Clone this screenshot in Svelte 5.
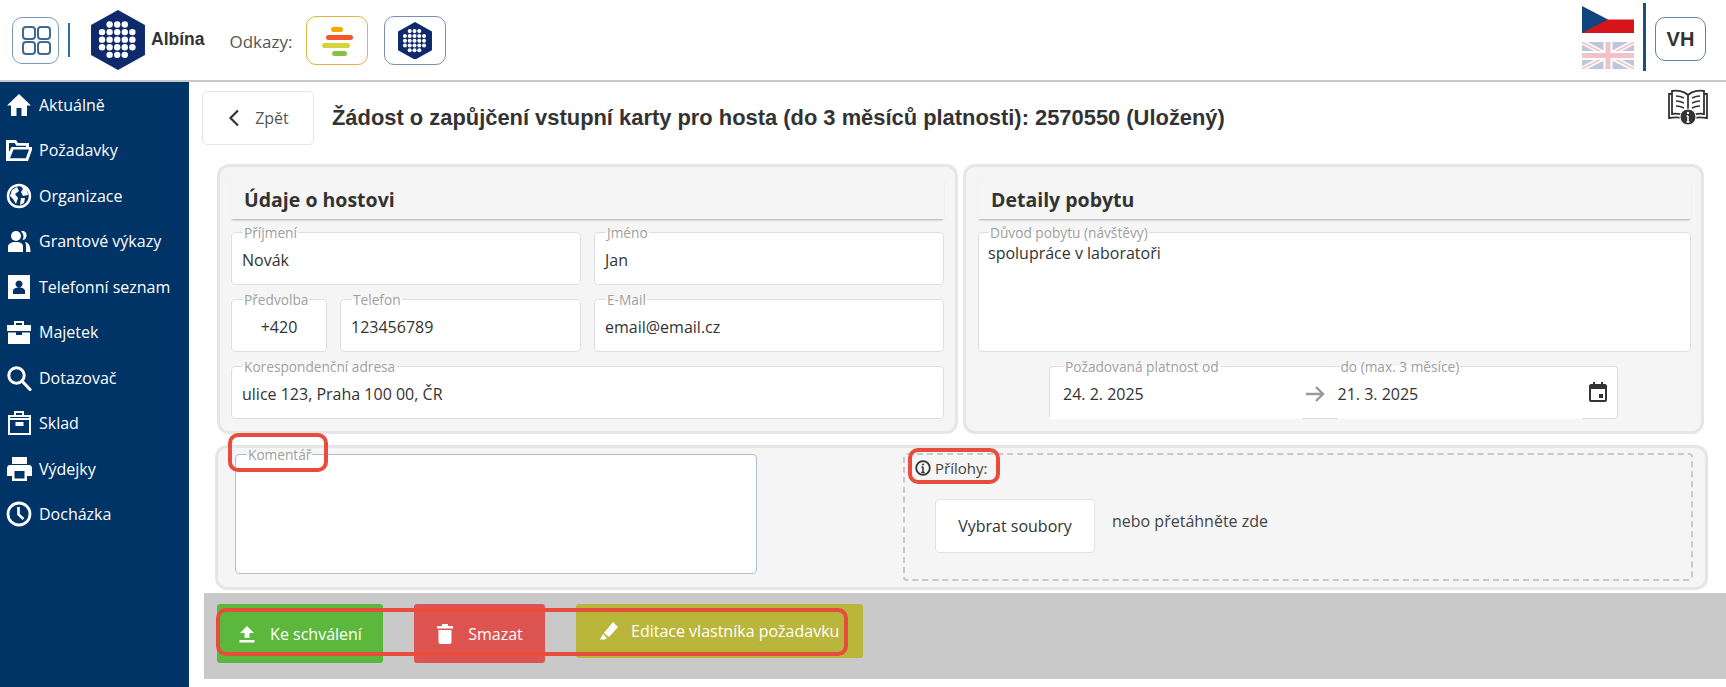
<script lang="ts">
	// Dots of the hexagon logo, row by row (x positions on a 5 column grid)
	const dotRows = [[1, 2, 3], [0, 1, 2, 3, 4], [0, 1, 2, 3, 4], [0, 1, 2, 3, 4], [1, 2, 3]];

	const menu = [
		{ label: 'Aktuálně', icon: 'home' },
		{ label: 'Požadavky', icon: 'folder' },
		{ label: 'Organizace', icon: 'globe' },
		{ label: 'Grantové výkazy', icon: 'users' },
		{ label: 'Telefonní seznam', icon: 'card' },
		{ label: 'Majetek', icon: 'case' },
		{ label: 'Dotazovač', icon: 'search' },
		{ label: 'Sklad', icon: 'box' },
		{ label: 'Výdejky', icon: 'print' },
		{ label: 'Docházka', icon: 'clock' }
	];
</script>

{#snippet logo(size)}
	<svg width={size} height={size * 1.11} viewBox="0 0 54 60">
		<polygon points="27,0 54,15 54,45 27,60 0,45 0,15" fill="#0f2a6b" />
		{#each dotRows as row, r}
			{#each row as c}
				<circle cx={11 + c * 7.6} cy={14.5 + r * 7.6} r="3.2" fill="#fff" />
			{/each}
		{/each}
	</svg>
{/snippet}

<div class="page">
	<header>
		<div class="header-left">
			<button class="grid-btn" aria-label="Menu">
				<svg width="30" height="30" viewBox="0 0 30 30" fill="none" stroke="#3f6a92" stroke-width="2">
					<rect x="2" y="2" width="12" height="12" rx="3" />
					<rect x="17" y="2" width="12" height="12" rx="3" />
					<rect x="2" y="17" width="12" height="12" rx="3" />
					<rect x="17" y="17" width="12" height="12" rx="3" />
				</svg>
			</button>
			<span class="divider-thin"></span>
			<div class="brand">
				{@render logo(54)}
				<strong>Albína</strong>
			</div>
			<span class="links-label">Odkazy:</span>
			<button class="link-btn yellow" aria-label="Odkaz 1">
				<svg width="34" height="34" viewBox="0 0 34 34">
					<rect x="11" y="3" width="12" height="5" rx="2.5" fill="#f7a800" />
					<rect x="6" y="11" width="27" height="5" rx="2.5" fill="#f2582a" />
					<rect x="2" y="19" width="28" height="5" rx="2.5" fill="#d5d33a" />
					<rect x="12" y="27" width="15" height="5" rx="2.5" fill="#85c241" />
				</svg>
			</button>
			<button class="link-btn navy" aria-label="Odkaz 2">{@render logo(34)}</button>
		</div>
		<div class="header-right">
			<div class="flags">
				<svg width="52" height="27" viewBox="0 0 52 27">
					<rect width="52" height="13.5" fill="#fff" />
					<rect y="13.5" width="52" height="13.5" fill="#d7141a" />
					<polygon points="0,0 26,13.5 0,27" fill="#11457e" />
				</svg>
				<svg class="uk" width="52" height="27" viewBox="0 0 52 27">
					<rect width="52" height="27" fill="#012169" />
					<path d="M0 0L52 27M52 0L0 27" stroke="#fff" stroke-width="5" />
					<path d="M0 0L52 27M52 0L0 27" stroke="#c8102e" stroke-width="1.6" />
					<path d="M26 0V27M0 13.5H52" stroke="#fff" stroke-width="9" />
					<path d="M26 0V27M0 13.5H52" stroke="#c8102e" stroke-width="5" />
				</svg>
			</div>
			<span class="divider-thick"></span>
			<button class="user-btn">VH</button>
		</div>
	</header>

	<div class="body">
		<aside>
			<ul>
				{#each menu as item}
					<li>
						<svg class="nav-icon" width="26" height="26" viewBox="0 0 26 26" fill="#fff">
							{#if item.icon === 'home'}
								<path d="M13 2L1 13.5H5V24H10.5V16H15.5V24H21V13.5H25Z" />
							{:else if item.icon === 'folder'}
								<path fill-rule="evenodd" d="M0 3H10L12 6H23V10H27L22 24H0ZM3 6V15L5.5 10H20V8.8H10.5L8.5 6ZM7.5 12.5L4 21.2H19.8L23 12.5Z" />
							{:else if item.icon === 'globe'}
								<circle cx="13" cy="13" r="11" fill="none" stroke="#fff" stroke-width="2.5" />
								<path d="M6 7L11 4L13 8L9 11L12 15L10 21L7 16L4 13ZM15 3L21 6L22 12L17 13L15 9L17 6ZM15 15L19 15L18 20L14 22Z" />
							{:else if item.icon === 'users'}
								<circle cx="10" cy="8" r="5" />
								<path d="M2 24V19C2 15.5 5 14 10 14C15 14 17 15.5 17 19V24Z" />
								<path d="M15 3.5C18.5 2 21 5 20.5 8C20 11 18 12 16.5 12C18 10 18 6 15 3.5ZM19 14C22 14.5 24.5 16.5 24.5 24H20V19C20 17 20 15.5 19 14Z" />
							{:else if item.icon === 'card'}
								<path fill-rule="evenodd" d="M2 1H24V25H2ZM13 6.5A3.5 3.5 0 1 0 13.01 6.5ZM7 20H19V17C19 15 16.5 13.5 13 13.5C9.5 13.5 7 15 7 17Z" />
							{:else if item.icon === 'case'}
								<path fill-rule="evenodd" d="M8 2H18V6H25V12H1V6H8ZM10 4V6H16V4Z" />
								<path d="M2 13.5H10V16H16V13.5H24V25H2Z" />
							{:else if item.icon === 'search'}
								<circle cx="10.5" cy="10.5" r="7.7" fill="none" stroke="#fff" stroke-width="3" />
								<path d="M16 16L24 24.5" stroke="#fff" stroke-width="3.2" stroke-linecap="round" />
							{:else if item.icon === 'box'}
								<path fill-rule="evenodd" d="M8 1H18V5H25V25H2V5H8ZM10 3V5H16V3ZM4 10V23H23V10ZM4 7V8H23V7Z" />
								<rect x="9.5" y="12" width="8" height="4" />
							{:else if item.icon === 'print'}
								<path fill-rule="evenodd" d="M6 1H21V8H6ZM4 9H23C25 9 26 10.5 26 12V20H21V25H6V20H1V12C1 10.5 2 9 4 9ZM8.5 15V22.5H18.5V15Z" />
							{:else if item.icon === 'clock'}
								<circle cx="13" cy="13" r="11" fill="none" stroke="#fff" stroke-width="2.8" />
								<path d="M12.5 6V13.5L17.5 18" fill="none" stroke="#fff" stroke-width="2.6" />
							{/if}
						</svg>
						<span>{item.label}</span>
					</li>
				{/each}
			</ul>
		</aside>

		<main>
			<div class="title-row">
				<button class="back">
					<svg width="14" height="18" viewBox="0 0 14 18" fill="none" stroke="#333" stroke-width="2.2">
						<path d="M11 1.5L3.5 9L11 16.5" />
					</svg>
					Zpět
				</button>
				<h1>Žádost o zapůjčení vstupní karty pro hosta (do 3 měsíců platnosti): 2570550 (Uložený)</h1>
				<svg class="manual" width="40" height="38" viewBox="0 0 40 38" fill="none" stroke="#333" stroke-width="1.8">
					<path d="M20 7C16 3 9 2 4 3V26C9 25 16 26 20 30C24 26 31 25 36 26V3C31 2 24 3 20 7ZM20 7V30" fill="#fff" />
					<path d="M4 6H1V30C8 29 14 29 18 32M36 6H39V30C32 29 26 29 22 32" />
					<path d="M8 8C11 8 14 9 16 10M8 13C11 13 14 14 16 15M8 18C11 18 14 19 16 20M24 10C26 9 29 8 32 8M24 15C26 14 29 13 32 13M24 20C26 19 29 18 32 18" stroke-width="1.5" />
					<circle cx="20" cy="29" r="8" fill="#333" stroke="#fff" stroke-width="1" />
					<path d="M20 28V34M18.5 34H21.5M18.5 28H20" stroke="#fff" stroke-width="1.6" />
					<circle cx="20" cy="25" r="1.2" fill="#fff" stroke="none" />
				</svg>
			</div>

			<div class="panels">
				<section class="panel guest">
					<h2>Údaje o hostovi</h2>
					<div class="fields">
						<fieldset>
							<legend>Příjmení</legend>
							<div class="value">Novák</div>
						</fieldset>
						<fieldset>
							<legend>Jméno</legend>
							<div class="value">Jan</div>
						</fieldset>
						<div class="phone">
							<fieldset>
								<legend>Předvolba</legend>
								<div class="value center">+420</div>
							</fieldset>
							<fieldset>
								<legend>Telefon</legend>
								<div class="value">123456789</div>
							</fieldset>
						</div>
						<fieldset>
							<legend>E-Mail</legend>
							<div class="value">email@email.cz</div>
						</fieldset>
						<fieldset class="wide">
							<legend>Korespondenční adresa</legend>
							<div class="value">ulice 123, Praha 100 00, ČR</div>
						</fieldset>
					</div>
				</section>

				<section class="panel stay">
					<h2>Detaily pobytu</h2>
					<fieldset class="reason">
						<legend>Důvod pobytu (návštěvy)</legend>
						<div class="reason-text">spolupráce v laboratoři</div>
					</fieldset>
					<div class="dates">
						<fieldset class="date-from">
							<legend>Požadovaná platnost od</legend>
							<div class="value date">24. 2. 2025</div>
							<svg class="arrow" width="20" height="18" viewBox="0 0 20 18" fill="none" stroke="#9a9a9a" stroke-width="2.4">
								<path d="M1 9H18M11 2L18 9L11 16" />
							</svg>
						</fieldset>
						<fieldset class="date-to">
							<legend>do (max. 3 měsíce)</legend>
							<div class="value date">21. 3. 2025</div>
							<svg class="calendar" width="18" height="20" viewBox="0 0 18 20">
								<path fill-rule="evenodd" d="M4 0H6V2H12V0H14V2H16C17 2 18 3 18 4V18C18 19 17 20 16 20H2C1 20 0 19 0 18V4C0 3 1 2 2 2H4ZM2 7V18H16V7ZM10 12H14V16H10Z" fill="#333" />
							</svg>
						</fieldset>
					</div>
				</section>
			</div>

			<section class="panel lower">
				<fieldset class="comment">
					<legend>Komentář</legend>
				</fieldset>
				<div class="attachments">
					<div class="att-title">
						<svg width="16" height="16" viewBox="0 0 16 16" fill="none" stroke="#333" stroke-width="1.8">
							<circle cx="8" cy="8" r="6.8" />
							<path d="M8 7V12.5M6.5 7H8M6.3 12.4H9.7" stroke-width="1.5" />
							<circle cx="8" cy="4.5" r="1" fill="#333" stroke="none" />
						</svg>
						Přílohy:
					</div>
					<div class="att-row">
						<button class="pick">Vybrat soubory</button>
						<span>nebo přetáhněte zde</span>
					</div>
				</div>
				<span class="mark mark-comment"></span>
				<span class="mark mark-att"></span>
			</section>

			<div class="actions">
				<button class="act green">
					<svg width="18" height="18" viewBox="0 0 18 18" fill="#fff"><path d="M9 1L16 8H11.5V13H6.5V8H2ZM1.5 15H16.5V17.5H1.5Z" /></svg>
					Ke schválení
				</button>
				<button class="act red">
					<svg width="18" height="20" viewBox="0 0 18 20" fill="#fff"><path d="M6 0H12V2H17V4.5H1V2H6ZM2.5 6H15.5V18C15.5 19 14.5 20 13.5 20H4.5C3.5 20 2.5 19 2.5 18Z" /></svg>
					Smazat
				</button>
				<button class="act olive">
					<svg width="20" height="20" viewBox="0 0 20 20" fill="#fff"><path d="M14 1L19 6L10 16L5 12ZM4 13L8 17L6 18.5H1Z" /></svg>
					Editace vlastníka požadavku
				</button>
				<span class="mark mark-actions"></span>
			</div>
		</main>
	</div>
</div>

<style>
	:global(body) {
		font-family: 'Open Sans', sans-serif;
		color: #333;
		background: #fff;
		overflow: hidden;
	}
	button {
		font-family: inherit;
		cursor: pointer;
	}
	.page {
		height: 687px;
		display: flex;
		flex-direction: column;
	}

	/* top bar */
	header {
		height: 80px;
		flex: none;
		display: flex;
		justify-content: space-between;
		border-bottom: 2px solid #c8c8c8;
	}
	.header-left {
		display: flex;
		align-items: center;
		padding-left: 12px;
	}
	.grid-btn {
		width: 47px;
		height: 47px;
		padding: 0;
		display: grid;
		place-items: center;
		background: #fff;
		border: 1.5px solid #7b9cb8;
		border-radius: 10px;
	}
	.divider-thin {
		width: 2px;
		height: 34px;
		margin: 0 21px 0 9px;
		background: #2a6fa8;
	}
	.brand {
		display: flex;
		align-items: center;
		gap: 6px;
	}
	.brand strong {
		font-family: 'Liberation Sans', sans-serif;
		font-size: 17.5px;
		margin-top: -2px;
	}
	.links-label {
		font-size: 17px;
		color: #555;
		margin: 2px 14px 0 25px;
	}
	.link-btn {
		width: 62px;
		height: 49px;
		padding: 0;
		display: grid;
		place-items: center;
		background: #fff;
		border-radius: 10px;
		margin-right: 16px;
		margin-top: 1px;
	}
	.yellow {
		border: 1.5px solid #e3b440;
	}
	.navy {
		border: 1.5px solid #7a8fb3;
	}
	.header-right {
		display: flex;
		align-items: center;
		padding-right: 20px;
	}
	.flags {
		display: flex;
		flex-direction: column;
		gap: 9px;
		margin-top: -5px;
	}
	.flags svg {
		display: block;
	}
	.uk {
		opacity: 0.25;
	}
	.divider-thick {
		width: 3px;
		height: 68px;
		margin: -6px 9px 0;
		background: #1f4e80;
	}
	.user-btn {
		width: 51px;
		height: 44px;
		margin-top: -2px;
		padding: 0;
		font-family: 'Liberation Sans', sans-serif;
		font-size: 20px;
		font-weight: 700;
		color: #333;
		background: #fff;
		border: 1.5px solid #5b85a8;
		border-radius: 10px;
	}

	/* layout */
	.body {
		flex: 1;
		display: flex;
		min-height: 0;
	}
	aside {
		width: 189px;
		flex: none;
		background: #003366;
	}
	aside ul {
		list-style: none;
		margin: 0;
		padding: 0 0 0 6px;
	}
	li {
		height: 45.5px;
		display: flex;
		align-items: center;
		gap: 7px;
		color: #fff;
		font-size: 16px;
	}
	.nav-icon {
		flex: none;
	}
	main {
		flex: 1;
		min-width: 0;
	}

	/* title */
	.title-row {
		position: relative;
		display: flex;
		align-items: center;
		gap: 18px;
		padding: 9px 0 10px 13px;
		height: 73px;
		box-sizing: border-box;
	}
	.back {
		width: 112px;
		height: 54px;
		display: flex;
		align-items: center;
		justify-content: center;
		gap: 14px;
		padding: 0;
		font-size: 16px;
		color: #555;
		background: #fff;
		border: 1.5px solid #e6e6e6;
		border-radius: 5px;
	}
	h1 {
		margin: 0;
		font-family: 'Liberation Sans', sans-serif;
		font-size: 21.9px;
		font-weight: 700;
		color: #333;
		white-space: nowrap;
	}
	.manual {
		position: absolute;
		top: 6px;
		right: 18px;
	}

	/* panels */
	.panels {
		display: grid;
		grid-template-columns: 741px 741px;
		gap: 5px;
		margin: 9px 0 0 28px;
	}
	.panel {
		box-sizing: border-box;
		background: #f5f5f5;
		border: 3px solid #e6e6e6;
		border-radius: 12px;
	}
	.guest,
	.stay {
		height: 270px;
		padding: 11px 11px 0;
	}
	.stay {
		padding: 11px 10px 0 12px;
	}
	h2 {
		margin: 0 0 6px;
		height: 41px;
		line-height: 44px;
		padding-left: 13px;
		font-size: 19.5px;
		font-weight: 700;
		color: #333;
		box-shadow: 0 2px 2px -1px rgba(0, 0, 0, 0.3);
	}
	fieldset {
		box-sizing: border-box;
		margin: 0;
		padding: 0 10px;
		min-width: 0;
		background: #fff;
		border: 1px solid #dedede;
		border-radius: 4px;
	}
	legend {
		position: relative;
		z-index: 1;
		top: 1px;
		margin-left: 1px;
		padding: 0 1px;
		font-size: 13.7px;
		line-height: 14px;
		color: #a0a0a0;
		white-space: nowrap;
	}
	.value {
		font-size: 16px;
		line-height: 42px;
		color: #333;
	}
	.center {
		text-align: center;
	}
	.fields {
		display: grid;
		grid-template-columns: 350px 350px;
		grid-auto-rows: 60px;
		gap: 7px 13px;
	}
	.fields fieldset {
		height: 60px;
	}
	.phone {
		display: grid;
		grid-template-columns: 96px 241px;
		gap: 13px;
	}
	.wide {
		grid-column: 1 / -1;
	}
	.reason {
		height: 127px;
		padding: 0 9px;
	}
	.reason-text {
		font-size: 16px;
		line-height: 20px;
		padding-top: 4px;
	}
	.dates {
		display: flex;
		margin: 7px 0 0 71px;
		width: 569px;
	}
	.dates fieldset {
		position: relative;
		height: 60px;
		padding: 0;
		flex: 1;
	}
	.date-from {
		border-right: none;
		border-radius: 4px 0 0 4px;
	}
	.date-to {
		border-left: none;
		border-radius: 0 4px 4px 0;
	}
	.date-from legend {
		margin-left: 14px;
	}
	.date-to legend {
		margin-left: 6px;
	}
	.date {
		background: #fff;
		height: 46px;
		margin-bottom: -1px;
		position: relative;
		box-sizing: border-box;
		line-height: 42px;
	}
	.date-from .date {
		width: 252px;
		padding-left: 13px;
	}
	.date-to .date {
		width: 244px;
		margin-left: 4px;
	}
	.arrow {
		position: absolute;
		top: 12px;
		right: 9px;
	}
	.calendar {
		position: absolute;
		top: 9px;
		right: 10px;
	}

	/* lower panel */
	.lower {
		position: relative;
		display: flex;
		height: 145px;
		margin: 11px 18px 0 26px;
		padding: 0 12px 0 17px;
	}
	.comment {
		width: 522px;
		height: 127px;
		flex: none;
		border-color: #aebfd3;
		margin-top: -1px;
	}
	.attachments {
		box-sizing: border-box;
		flex: 1;
		height: 128px;
		margin: 5px 0 0 146px;
		border: 2px dashed #c9c9c9;
		border-radius: 4px;
	}
	.att-title {
		display: flex;
		align-items: center;
		gap: 4px;
		padding: 3px 0 0 10px;
		font-size: 15px;
		color: #444;
	}
	.att-row {
		display: flex;
		align-items: flex-start;
		gap: 17px;
		margin: 21px 0 0 30px;
		font-size: 16px;
		color: #444;
	}
	.att-row span {
		margin-top: 11px;
	}
	.pick {
		width: 160px;
		height: 54px;
		padding: 0;
		font-size: 16px;
		color: #333;
		background: #fff;
		border: 1px solid #e3e3e3;
		border-radius: 4px;
	}

	/* action bar */
	.actions {
		position: relative;
		display: flex;
		align-items: flex-start;
		gap: 31px;
		height: 86px;
		margin: 3px 0 0 15px;
		padding: 11px 0 0 13px;
		box-sizing: border-box;
		background: #c9c9c9;
	}
	.act {
		display: flex;
		align-items: center;
		justify-content: center;
		gap: 14px;
		height: 59px;
		padding: 0;
		font-size: 16px;
		color: #fff;
		border: none;
		border-radius: 3px;
	}
	.green {
		width: 166px;
		background: #5cb83c;
	}
	.red {
		width: 131px;
		background: #dc5350;
	}
	.olive {
		width: 287px;
		height: 54px;
		justify-content: flex-start;
		padding-left: 23px;
		gap: 12px;
		box-sizing: border-box;
		background: #bab63c;
	}

	/* red highlight frames over the screenshot */
	.mark {
		position: absolute;
		box-sizing: border-box;
		border: 4px solid #e74c3c;
		border-radius: 10px;
		pointer-events: none;
	}
	.mark-comment {
		left: 10px;
		top: -15px;
		width: 100px;
		height: 39px;
	}
	.mark-att {
		left: 690px;
		top: 0;
		width: 92px;
		height: 36px;
	}
	.mark-actions {
		left: 12px;
		top: 15px;
		width: 632px;
		height: 48px;
	}
</style>
